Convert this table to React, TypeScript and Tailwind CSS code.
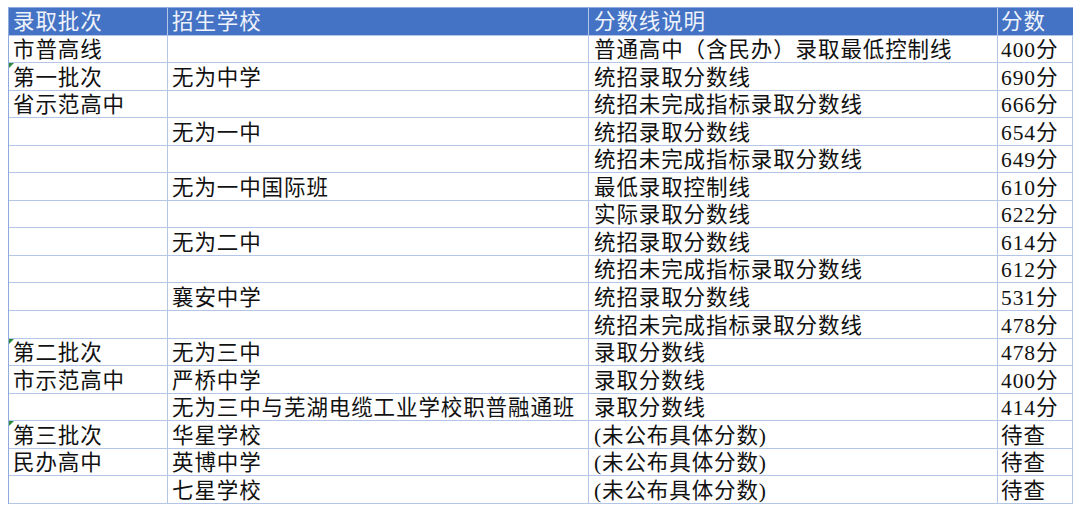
import React from "react";

type Row = { a: string; b: string; c: string; d: string; mark?: boolean };

const rows: Row[] = [
  { a: "市普高线", b: "", c: "普通高中（含民办）录取最低控制线", d: "400分" },
  { a: "第一批次", b: "无为中学", c: "统招录取分数线", d: "690分", mark: true },
  { a: "省示范高中", b: "", c: "统招未完成指标录取分数线", d: "666分" },
  { a: "", b: "无为一中", c: "统招录取分数线", d: "654分" },
  { a: "", b: "", c: "统招未完成指标录取分数线", d: "649分" },
  { a: "", b: "无为一中国际班", c: "最低录取控制线", d: "610分" },
  { a: "", b: "", c: "实际录取分数线", d: "622分" },
  { a: "", b: "无为二中", c: "统招录取分数线", d: "614分" },
  { a: "", b: "", c: "统招未完成指标录取分数线", d: "612分" },
  { a: "", b: "襄安中学", c: "统招录取分数线", d: "531分" },
  { a: "", b: "", c: "统招未完成指标录取分数线", d: "478分" },
  { a: "第二批次", b: "无为三中", c: "录取分数线", d: "478分", mark: true },
  { a: "市示范高中", b: "严桥中学", c: "录取分数线", d: "400分" },
  { a: "", b: "无为三中与芜湖电缆工业学校职普融通班", c: "录取分数线", d: "414分" },
  { a: "第三批次", b: "华星学校", c: "(未公布具体分数)", d: "待查", mark: true },
  { a: "民办高中", b: "英博中学", c: "(未公布具体分数)", d: "待查" },
  { a: "", b: "七星学校", c: "(未公布具体分数)", d: "待查" },
];

const font = { fontFamily: '"Liberation Serif", "Noto Sans CJK SC", serif' };

function Cell({ children, mark, pl }: { children?: React.ReactNode; mark?: boolean; pl: string }) {
  return (
    <div className={`relative flex items-center h-[27.55px] border-r border-b border-[#b4c6e7] ${pl} pt-[4px] text-[21.5px] leading-none tracking-[0.9px] text-[#111] whitespace-nowrap overflow-hidden`}>
      {mark && (
        <span className="absolute left-0 top-0 w-0 h-0 border-t-[5px] border-r-[5px] border-t-[#2e8b3a] border-r-transparent" />
      )}
      {children}
    </div>
  );
}

function HCell({ children, pl, last }: { children: React.ReactNode; pl: string; last?: boolean }) {
  return (
    <div className={`flex items-center h-[27.55px] bg-[#4472c4] ${last ? "" : "border-r border-[#8faadc]"} border-b border-[#b4c6e7] ${pl} pt-[3px] text-[21.5px] leading-none tracking-[0.9px] text-[#eef3fb] whitespace-nowrap`}>
      {children}
    </div>
  );
}

export default function App() {
  return (
    <div className="w-[1080px] h-[512px] bg-white pt-[7px] pl-[8px]" style={font}>
      <div className="grid grid-cols-[159px_421px_409px_75px] w-[1065px] border-l border-t border-[#8faadc]">
        <HCell pl="pl-[4px]">录取批次</HCell>
        <HCell pl="pl-[4px]">招生学校</HCell>
        <HCell pl="pl-[5px]">分数线说明</HCell>
        <HCell pl="pl-[3px]" last>分数</HCell>
        {rows.map((r, i) => (
          <React.Fragment key={i}>
            <Cell pl="pl-[4px]" mark={r.mark}>{r.a}</Cell>
            <Cell pl="pl-[4px]">{r.b}</Cell>
            <Cell pl="pl-[5px]">{r.c}</Cell>
            <Cell pl="pl-[3px]">{r.d}</Cell>
          </React.Fragment>
        ))}
      </div>
    </div>
  );
}
